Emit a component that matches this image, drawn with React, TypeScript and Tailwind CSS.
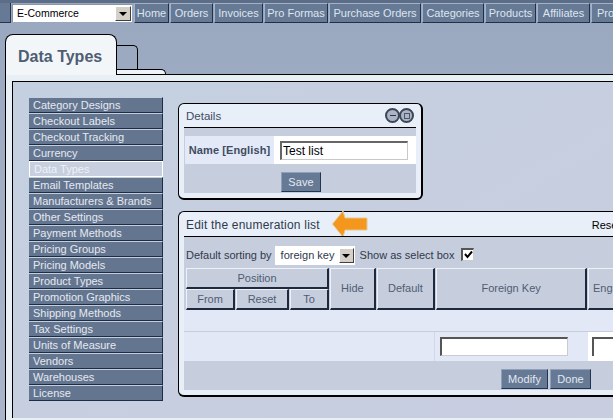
import React from 'react';

const NAV = [
  { label: 'Home', w: 'w-[35px]' },
  { label: 'Orders', w: 'w-[43px]' },
  { label: 'Invoices', w: 'w-[49px]' },
  { label: 'Pro Formas', w: 'w-[64px]' },
  { label: 'Purchase Orders', w: 'w-[92px]' },
  { label: 'Categories', w: 'w-[62px]' },
  { label: 'Products', w: 'w-[51px]' },
  { label: 'Affiliates', w: 'w-[53px]' },
];

const SIDE = [
  'Category Designs', 'Checkout Labels', 'Checkout Tracking', 'Currency', 'Data Types',
  'Email Templates', 'Manufacturers & Brands', 'Other Settings', 'Payment Methods', 'Pricing Groups',
  'Pricing Models', 'Product Types', 'Promotion Graphics', 'Shipping Methods', 'Tax Settings',
  'Units of Measure', 'Vendors', 'Warehouses', 'License',
];

function DropArrow({ className }: { className: string }) {
  return (
    <span className={`flex items-center justify-center bg-[#d4d0c8] border-t border-l border-white border-r border-b border-r-[#404040] border-b-[#404040] ${className}`}>
      <span className="w-0 h-0 border-x-[4px] border-x-transparent border-t-[4px] border-t-black" />
    </span>
  );
}

function Btn({ label, w }: { label: string; w: string }) {
  return (
    <div className={`${w} h-[20px] flex items-center justify-center bg-[#667a96] border-t border-l border-[#8fa0b8] border-r border-b border-r-[#24364f] border-b-[#24364f] text-[11px] tracking-[0.1px] text-[#e4e9f1]`}>
      {label}
    </div>
  );
}

function HeadCell({ label, className }: { label: string; className: string }) {
  return (
    <div className={`flex items-center justify-center bg-[#c6cddd] border-t border-l border-[#eef2f8] border-r-2 border-b-2 border-r-[#1d2a3d] border-b-[#1d2a3d] text-[11px] text-[#4f5d73] ${className}`}>
      {label}
    </div>
  );
}

export default function App() {
  return (
    <div className="w-[613px] h-[420px] overflow-hidden flex flex-col bg-gradient-to-b from-[#9aa8bf] to-[#a9b5cb] font-['Liberation_Sans',Arial,sans-serif]">
      {/* top bar */}
      <div className="h-[3px] shrink-0 bg-[#5c6d87]" />
      <div className="h-[20px] shrink-0 flex items-center">
        <div className="w-[11px] h-[20px] shrink-0 bg-[#667a96] border-r border-b border-[#24364f]" />
        <div className="ml-[1px] w-[120px] h-[18px] shrink-0 flex items-center justify-between bg-white border-t border-l border-[#8a94a4] pl-[4px] pr-[1px] text-[10.5px] text-black">
          <span>E-Commerce</span>
          <DropArrow className="w-[16px] h-[15px]" />
        </div>
        <div className="ml-[2px] flex gap-[1px] shrink-0">
          {NAV.map(n => (
            <div key={n.label} className={`${n.w} h-[20px] shrink-0 flex items-center justify-center bg-[#667a96] border-t border-l border-[#a3b2c8] border-r border-b border-r-[#1f3049] border-b-[#1f3049] text-[11px] text-[#dfe5ee] whitespace-nowrap`}>
              {n.label}
            </div>
          ))}
          <div className="w-[22px] h-[20px] shrink-0 flex items-center pl-[5px] bg-[#667a96] border-t border-l border-[#a3b2c8] border-b border-b-[#1f3049] text-[11px] text-[#dfe5ee]">
            Pro
          </div>
        </div>
      </div>

      {/* tabs */}
      <div className="mt-[11px] h-[40px] shrink-0 flex items-end pl-[5px]">
        <div className="w-[112px] h-[41px] -mb-[1px] relative z-10 flex items-center pl-[12px] pt-[4px] bg-[#f2f6f9] border-t border-l border-r border-black rounded-t-[8px] text-[16px] font-bold text-[#4f5d73]">
          Data Types
        </div>
        <div className="flex flex-col -ml-[1px]">
          <div className="w-[22px] h-[24px] border-t border-r border-black rounded-tr-[5px]" />
          <div className="w-[50px] h-[5px] bg-[#eef3f7] border-t border-r border-black rounded-tr-[5px]" />
        </div>
      </div>

      {/* panel */}
      <div className="flex-1 min-h-0 ml-[5px] flex flex-col pt-[6px] pl-[6px] pb-[2px] bg-[#e9f0f5] border-t border-l border-black">
        <div className="flex-1 min-h-0 flex items-start pt-[15px] pl-[16px] gap-[15px] bg-gradient-to-br from-[#c4d0e0] to-[#c8cde0] border-t border-l border-black">
          {/* sidebar */}
          <div className="w-[134px] shrink-0 flex flex-col">
            {SIDE.map(s => {
              const active = s === 'Data Types';
              return (
                <div
                  key={s}
                  className={
                    active
                      ? 'h-[16px] flex items-center pl-[4px] bg-[#c8d0df] border border-white text-[11px] text-[#eef2f7] whitespace-nowrap'
                      : 'h-[16px] flex items-center pl-[4px] bg-[#64768f] border-t border-t-[#c4cfde] border-b border-b-[#1d2d45] border-r border-r-[#1d2d45] text-[11px] text-[#e4e9f1] whitespace-nowrap'
                  }
                >
                  {s}
                </div>
              );
            })}
          </div>

          {/* right column */}
          <div className="w-[500px] shrink-0 flex flex-col pt-[6px]">
            {/* details */}
            <div className="w-[245px] h-[97px] flex flex-col bg-[#e9eff9] border border-black border-r-2 border-b-2 rounded-[6px] px-[5px] pb-[5px]">
              <div className="h-[23px] shrink-0 flex items-center justify-between pl-[2px] pr-[2px] pt-[2px] text-[11.5px] text-[#3f4c62]">
                <span>Details</span>
                <div className="flex -space-x-[1px] -mt-[2px]">
                  <span className="w-[15px] h-[15px] rounded-full bg-[#aab4c4] border-2 border-[#3c4656] flex items-center justify-center">
                    <span className="w-[6px] h-[1px] bg-[#2c3646]" />
                  </span>
                  <span className="w-[15px] h-[15px] rounded-full bg-[#aab4c4] border-2 border-[#3c4656] flex items-center justify-center">
                    <span className="w-[6px] h-[6px] border border-[#4c5666]" />
                  </span>
                </div>
              </div>
              <div className="flex-1 flex flex-col bg-[#c6cddd] border-t border-black">
                <div className="mt-[8px] h-[28px] flex ml-[1px] gap-[2px] bg-white">
                  <div className="w-[89px] flex items-center justify-center bg-[#e3e9f6] text-[11px] font-bold tracking-[0.1px] text-[#3f4c62] whitespace-nowrap">
                    Name [English]
                  </div>
                  <div className="flex-1 flex items-center pl-[4px]">
                    <input
                      readOnly
                      value="Test list"
                      className="w-[128px] h-[19px] px-[1px] bg-white border-t-2 border-l-2 border-t-[#666] border-l-[#666] border-r border-b border-r-[#c8c8c8] border-b-[#c8c8c8] text-[12px] text-black outline-none"
                    />
                  </div>
                </div>
                <div className="mt-[8px] ml-[97px]">
                  <Btn label="Save" w="w-[40px]" />
                </div>
              </div>
            </div>

            {/* enumeration list */}
            <div className="mt-[11px] w-[480px] h-[186px] flex flex-col bg-[#e9eff9] border-t border-l border-b-2 border-black rounded-tl-[6px] rounded-bl-[6px] pl-[5px] pb-[5px]">
              <div className="h-[24px] shrink-0 flex items-center pl-[2px] text-[12px] tracking-[0.2px] text-[#2f3a4c]">
                <span className="pt-[2px]">Edit the enumeration list</span>
                <svg className="ml-[12px] shrink-0" width="36" height="28" viewBox="0 0 36 28">
                  <path d="M0.5 14 L11 1 L13 8 L35 8 L35 20 L13 20 L11 27 Z" fill="#f5971d" stroke="#e0c88c" strokeWidth="1" />
                </svg>
                <span className="ml-[224px] pt-[2px] text-[11px] tracking-normal text-black">Rese</span>
              </div>
              <div className="flex-1 min-h-0 flex flex-col bg-[#c6cddd] border-t border-black overflow-hidden">
                <div className="h-[31px] shrink-0 flex items-center pl-[2px] pt-[6px] text-[11px] text-[#2f3a4c] whitespace-nowrap">
                  <span>Default sorting by</span>
                  <div className="ml-[3px] w-[80px] h-[19px] flex items-center justify-between bg-white pl-[6px] pr-[1px]">
                    <span>foreign key</span>
                    <DropArrow className="w-[15px] h-[15px]" />
                  </div>
                  <span className="ml-[5px]">Show as select box</span>
                  <span className="ml-[7px] -mt-[3px] w-[13px] h-[13px] flex items-center justify-center bg-white border-t-2 border-l-2 border-t-[#555] border-l-[#555] border-r border-b border-r-[#ccc] border-b-[#ccc]">
                    <svg width="9" height="9" viewBox="0 0 9 9">
                      <path d="M1 4 L3.5 7 L8 1.5" fill="none" stroke="black" strokeWidth="2" />
                    </svg>
                  </span>
                </div>

                {/* table head */}
                <div className="h-[42px] shrink-0 flex pl-[2px] gap-[1px]">
                  <div className="w-[143px] flex flex-col">
                    <HeadCell label="Position" className="h-[21px]" />
                    <div className="h-[21px] flex gap-[1px]">
                      <HeadCell label="From" className="w-[49px]" />
                      <HeadCell label="Reset" className="w-[53px]" />
                      <HeadCell label="To" className="w-[39px]" />
                    </div>
                  </div>
                  <HeadCell label="Hide" className="w-[46px]" />
                  <HeadCell label="Default" className="w-[59px]" />
                  <HeadCell label="Foreign Key" className="w-[152px]" />
                  <div className="w-[70px] shrink-0 flex items-center pl-[4px] bg-[#c6cddd] border-t border-l border-[#eef2f8] border-b-2 border-b-[#1d2a3d] text-[11px] text-[#4f5d73]">
                    Eng
                  </div>
                </div>

                {/* table body */}
                <div className="h-[22px] shrink-0 bg-[#e3e8f6] border-b border-[#c6cddd]" />
                <div className="h-[29px] shrink-0 flex bg-[#e3e8f6]">
                  <div className="w-[250px] shrink-0" />
                  <div className="w-[154px] shrink-0 flex items-center pl-[5px] border-l border-[#d2d8e8]">
                    <input readOnly className="w-[128px] h-[19px] bg-white border-t-2 border-l-2 border-t-[#555] border-l-[#555] border-r border-b border-r-[#ccc] border-b-[#ccc] outline-none" />
                  </div>
                  <div className="w-[70px] shrink-0 flex items-center pl-[4px] bg-white">
                    <input readOnly className="w-[60px] h-[19px] bg-white border-t-2 border-l-2 border-t-[#555] border-l-[#555] outline-none" />
                  </div>
                </div>

                {/* footer buttons */}
                <div className="flex-1 flex items-start pt-[8px] pl-[317px] gap-[2px]">
                  <Btn label="Modify" w="w-[47px]" />
                  <Btn label="Done" w="w-[41px]" />
                </div>
              </div>
            </div>
          </div>
        </div>
      </div>
    </div>
  );
}
